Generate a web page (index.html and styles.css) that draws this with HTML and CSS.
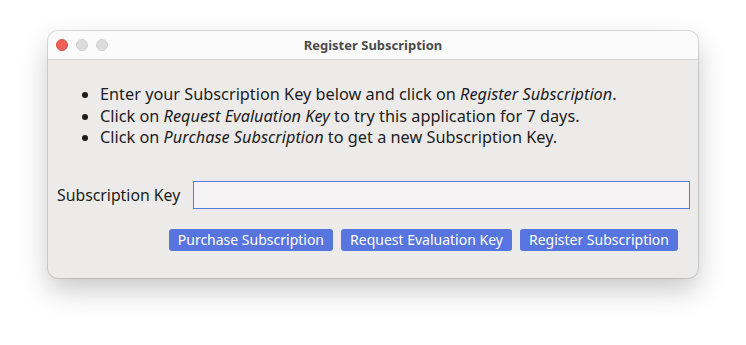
FILE: index.html
```html
<!DOCTYPE html>
<html>
<head>
<meta charset="utf-8">
<link rel="stylesheet" href="styles.css">
</head>
<body>
<div class="window">
  <div class="titlebar">
    <div class="lights">
      <span class="light red"></span>
      <span class="light gray"></span>
      <span class="light gray"></span>
    </div>
    <div class="title">Register Subscription</div>
  </div>
  <div class="content">
    <ul class="info">
      <li>Enter your Subscription Key below and click on <em>Register Subscription</em>.</li>
      <li>Click on <em>Request Evaluation Key</em> to try this application for 7 days.</li>
      <li>Click on <em>Purchase Subscription</em> to get a new Subscription Key.</li>
    </ul>
    <div class="keyrow">
      <label class="keylabel">Subscription Key</label>
      <input class="keyinput" type="text">
    </div>
    <div class="buttons">
      <button class="btn">Purchase Subscription</button>
      <button class="btn">Request Evaluation Key</button>
      <button class="btn">Register Subscription</button>
    </div>
  </div>
</div>
</body>
</html>
```

FILE: styles.css
```css
html, body {
  margin: 0;
  padding: 0;
  background: #ffffff;
}
body {
  width: 746px;
  height: 345px;
  overflow: hidden;
  font-family: "Noto Sans", "Open Sans", sans-serif;
}
.window {
  margin: 31px 0 0 48px;
  width: 650px;
  height: 247px;
  box-sizing: border-box;
  border-radius: 10px;
  background: #ecebea;
  box-shadow: 0 0 0 1px rgba(0,0,0,0.12), 0 12px 28px rgba(0,0,0,0.22);
  overflow: hidden;
  display: flex;
  flex-direction: column;
}
.titlebar {
  height: 28px;
  background: #fbfbfb;
  border-bottom: 1px solid #d6d5d5;
  display: flex;
  align-items: center;
  position: relative;
}
.lights {
  display: flex;
  gap: 8px;
  padding-left: 8px;
}
.light {
  width: 12px;
  height: 12px;
  border-radius: 50%;
  box-sizing: border-box;
}
.light.red {
  background: #ed5f57;
  border: 1px solid #dc4e46;
}
.light.gray {
  background: #dcdcdc;
  border: 1px solid #cfcfcf;
}
.title {
  position: absolute;
  left: 0;
  right: 0;
  text-align: center;
  font-size: 13px;
  font-weight: bold;
  color: #4c4c4c;
  pointer-events: none;
}
.content {
  flex: 1;
  padding: 24px 8px 0 9px;
  display: flex;
  flex-direction: column;
}
.info {
  margin: 0;
  padding-left: 43px;
  font-size: 16.3px;
  line-height: 21.5px;
  color: #1c1c1c;
}
.info em {
  font-style: italic;
}
.keyrow {
  display: flex;
  align-items: center;
  margin-top: 32px;
}
.keylabel {
  font-size: 15.8px;
  color: #1c1c1c;
  width: 136px;
}
.keyinput {
  flex: 1;
  height: 28px;
  box-sizing: border-box;
  border: 1px solid #5b7be0;
  background: #f4f2f3;
  outline: none;
  margin: 0;
}
.buttons {
  display: flex;
  justify-content: flex-end;
  gap: 8px;
  margin-top: 20px;
  padding-right: 12px;
}
.btn {
  font-family: "Noto Sans", "Open Sans", sans-serif;
  font-size: 14px;
  color: #ffffff;
  background: #5675de;
  border: none;
  border-radius: 3px;
  height: 22px;
  padding: 0 9px;
  line-height: 22px;
}
```
